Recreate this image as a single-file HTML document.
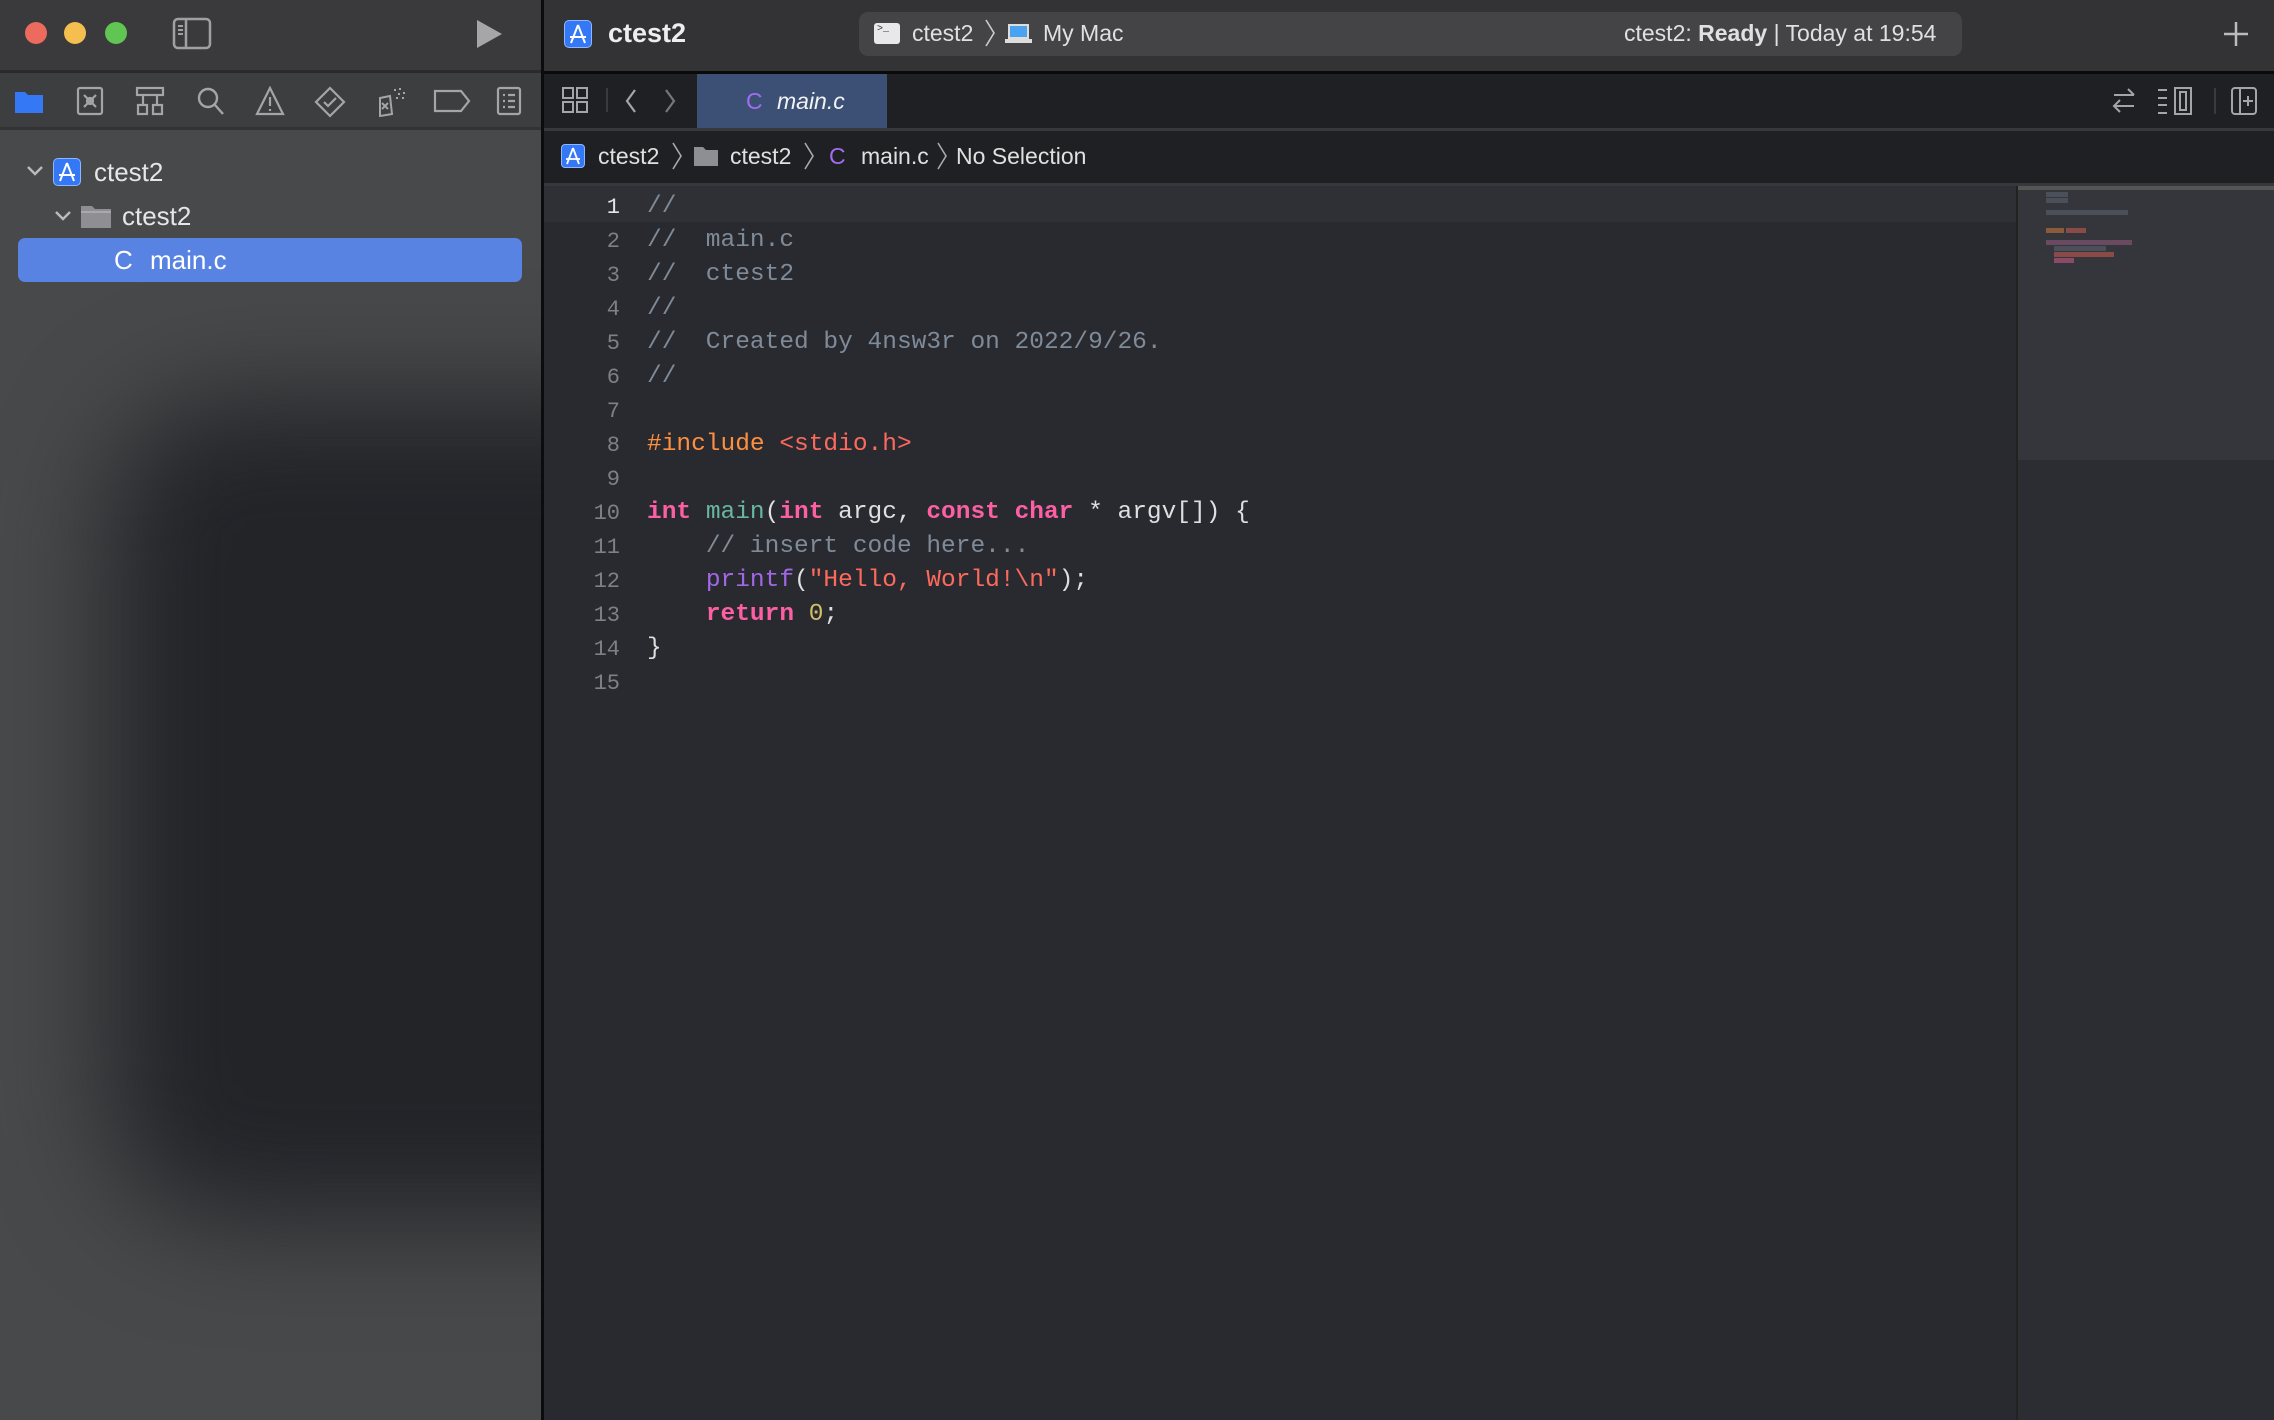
<!DOCTYPE html>
<html><head><meta charset="utf-8"><style>
*{margin:0;padding:0;box-sizing:border-box}
body{width:2274px;height:1420px;overflow:hidden;background:#292a30;font-family:"Liberation Sans",sans-serif;position:relative}
.abs{position:absolute}
#side{left:0;top:0;width:541px;height:1420px;background:#48494b;overflow:hidden}
#blob{left:110px;top:400px;width:800px;height:820px;background:#232428;filter:blur(55px);border-radius:120px}
#divv{left:541px;top:0;width:3px;height:1420px;background:#0c0c0e}
#title{left:544px;top:0;width:1730px;height:72px;background:#333336}
#sidetop{left:0;top:0;width:541px;height:72px;background:#3a3a3c}
.hl{height:3px;background:#2c2c2e}
#tabbar{left:544px;top:74px;width:1730px;height:54px;background:#1f2023}
#crumb{left:544px;top:131px;width:1730px;height:52px;background:#1f2023}
.code{font-family:"Liberation Mono",monospace;font-size:24.5px;white-space:pre;position:absolute;left:647px;color:#dfdfe0}
.ln{font-family:"Liberation Mono",monospace;font-size:22px;color:#7f8087;position:absolute;width:80px;text-align:right;left:540px}
.cm{color:#7f8b98}.kw{color:#fc5fa3;font-weight:bold}.fn{color:#67b7a4}.pp{color:#fd8f3f}.st{color:#fc6a5d}.pf{color:#a167e6}.nm{color:#d0bf69}
.t{color:#e6e6e6;font-size:25px;position:absolute}
svg{position:absolute}
</style></head><body>
<div id="side" class="abs"><div id="blob" class="abs"></div></div>
<div id="sidetop" class="abs"></div>
<div class="abs hl" style="left:0;top:70px;width:541px;background:#2a2a2c"></div>
<div class="abs hl" style="left:0;top:127px;width:541px;background:#333335"></div>
<div class="abs" style="left:0;top:73px;width:541px;height:54px;background:#3d3e40"></div>
<div id="divv" class="abs"></div>
<div id="title" class="abs"></div>
<div class="abs" style="left:544px;top:71px;width:1730px;height:3px;background:#0a0a0a"></div>
<div id="tabbar" class="abs"></div>
<div class="abs" style="left:544px;top:128px;width:1730px;height:3px;background:#38383b"></div>
<div id="crumb" class="abs"></div>
<div class="abs" style="left:544px;top:183px;width:1730px;height:3px;background:#38383b"></div>

<!-- traffic lights -->
<div class="abs" style="left:25px;top:22px;width:22px;height:22px;border-radius:50%;background:#ec6a5e"></div>
<div class="abs" style="left:64px;top:22px;width:22px;height:22px;border-radius:50%;background:#f4bf4f"></div>
<div class="abs" style="left:105px;top:22px;width:22px;height:22px;border-radius:50%;background:#61c554"></div>
<svg style="left:172px;top:17px" width="40" height="33"><rect x="2" y="2" width="36" height="29" rx="4" fill="none" stroke="#a0a0a2" stroke-width="2.5"/><line x1="14" y1="2" x2="14" y2="31" stroke="#a0a0a2" stroke-width="2.5"/><path d="M6 9h5M6 13h5M6 17h5" stroke="#a0a0a2" stroke-width="2"/></svg>
<svg style="left:474px;top:18px" width="30" height="32"><path d="M3 2 L28 16 L3 30Z" fill="#a6a6a8"/></svg>

<!-- navigator icons -->
<svg style="left:14px;top:88px" width="30" height="26"><path d="M1 4h10l3 3h15v18H1Z" fill="#3478f6"/></svg>
<svg style="left:76px;top:86px" width="28" height="30" fill="none" stroke="#a5a5a7" stroke-width="2.2"><rect x="2" y="2" width="24" height="26" rx="2"/><path d="M8 9l12 12M20 9L8 21"/><circle cx="14" cy="15" r="3"/></svg>
<svg style="left:135px;top:86px" width="30" height="30" fill="none" stroke="#a5a5a7" stroke-width="2.2"><rect x="2" y="2" width="26" height="7"/><path d="M8 9v10M22 9v10"/><rect x="3" y="19" width="9" height="9"/><rect x="18" y="19" width="9" height="9"/></svg>
<svg style="left:196px;top:86px" width="30" height="30" fill="none" stroke="#a5a5a7" stroke-width="2.4"><circle cx="12" cy="12" r="9"/><path d="M19 19l8 9"/></svg>
<svg style="left:255px;top:86px" width="30" height="30" fill="none" stroke="#a5a5a7" stroke-width="2.2"><path d="M15 2L2 28h26Z"/><path d="M15 11v9M15 23v2"/></svg>
<svg style="left:314px;top:86px" width="32" height="32" fill="none" stroke="#a5a5a7" stroke-width="2.2"><path d="M16 2L30 16 16 30 2 16Z"/><path d="M10 16l4 4 8-8"/></svg>
<svg style="left:374px;top:86px" width="34" height="32" fill="none" stroke="#a5a5a7" stroke-width="2"><path d="M6 12l10 -2 2 18-12 2Z"/><path d="M8 17l6 6M14 17l-6 6"/><path d="M20 4h2M25 3h2M24 8h2M29 7h2M22 12h2M28 12h2" /></svg>
<svg style="left:432px;top:89px" width="40" height="24" fill="none" stroke="#a5a5a7" stroke-width="2.2"><path d="M3 2h26l8 10-8 10H3Z"/></svg>
<svg style="left:496px;top:86px" width="26" height="30" fill="none" stroke="#a5a5a7" stroke-width="2.2"><rect x="2" y="2" width="22" height="26" rx="2"/><path d="M7 9h2M12 9h7M7 15h2M12 15h7M7 21h2M12 21h7"/></svg>

<!-- tree -->
<svg style="left:26px;top:165px" width="18" height="12"><path d="M2 2l7 7 7-7" fill="none" stroke="#bbb" stroke-width="2.4"/></svg>
<div class="abs" style="left:53px;top:158px;width:28px;height:28px;border-radius:5px;background:#3478f6;border:1.5px solid #8fb7ff"></div>
<svg style="left:53px;top:158px" width="28" height="28" fill="none" stroke="#fff" stroke-width="2"><path d="M14 5L7 23M14 5l7 18M6 17h16"/></svg>
<div class="t" style="left:94px;top:157px;font-size:26px">ctest2</div>
<svg style="left:54px;top:210px" width="18" height="12"><path d="M2 2l7 7 7-7" fill="none" stroke="#bbb" stroke-width="2.4"/></svg>
<svg style="left:80px;top:203px" width="32" height="26"><path d="M1 3h11l3 3h16v19H1Z" fill="#8e8e93"/><path d="M1 9h30" stroke="#a8a8ad" stroke-width="2"/></svg>
<div class="t" style="left:122px;top:201px;font-size:26px">ctest2</div>
<div class="abs" style="left:18px;top:238px;width:504px;height:44px;border-radius:7px;background:#5883e2"></div>
<div class="t" style="left:114px;top:245px;font-size:26px;color:#fff">C</div>
<div class="t" style="left:150px;top:245px;font-size:26px;color:#fff">main.c</div>

<!-- title bar -->
<div class="abs" style="left:564px;top:20px;width:28px;height:28px;border-radius:5px;background:#3478f6;border:1.5px solid #8fb7ff"></div>
<svg style="left:564px;top:20px" width="28" height="28" fill="none" stroke="#fff" stroke-width="2"><path d="M14 5L7 23M14 5l7 18M6 17h16"/></svg>
<div class="t" style="left:608px;top:18px;font-size:27px;font-weight:bold;color:#eee">ctest2</div>
<div class="abs" style="left:859px;top:12px;width:1103px;height:44px;border-radius:9px;background:#444446"></div>
<div class="abs" style="left:874px;top:23px;width:26px;height:21px;border-radius:3px;background:#e8e8ea"></div>
<div class="abs" style="left:877px;top:24px;font-size:10px;color:#333;font-family:'Liberation Mono'">&gt;_</div>
<div class="t" style="left:912px;top:20px;font-size:23px;color:#e0e0e0">ctest2</div>
<svg style="left:984px;top:18px" width="12" height="30"><path d="M2 2l8 13-8 13" fill="none" stroke="#ccc" stroke-width="1.6"/></svg>
<div class="abs" style="left:1008px;top:24px;width:21px;height:15px;background:#4aa3f0;border:2px solid #ddd"></div>
<div class="abs" style="left:1005px;top:39px;width:27px;height:4px;background:#ddd"></div>
<div class="t" style="left:1043px;top:20px;font-size:23px;color:#e0e0e0">My Mac</div>
<div class="t" style="left:1624px;top:20px;font-size:23px;color:#e0e0e0">ctest2: <b>Ready</b> | Today at 19:54</div>
<svg style="left:2223px;top:21px" width="26" height="26"><path d="M13 1v24M1 13h24" stroke="#bbb" stroke-width="2.5"/></svg>

<!-- tab bar -->
<svg style="left:561px;top:86px" width="28" height="28" fill="none" stroke="#a5a5a7" stroke-width="2"><rect x="2" y="2" width="10" height="10"/><rect x="16" y="2" width="10" height="10"/><rect x="2" y="16" width="10" height="10"/><rect x="16" y="16" width="10" height="10"/></svg>
<div class="abs" style="left:606px;top:88px;width:2px;height:24px;background:#3a3a3c"></div>
<svg style="left:624px;top:88px" width="14" height="26"><path d="M11 2L3 13l8 11" fill="none" stroke="#a5a5a7" stroke-width="2.2"/></svg>
<svg style="left:663px;top:88px" width="14" height="26"><path d="M3 2l8 11-8 11" fill="none" stroke="#777" stroke-width="2.2"/></svg>
<div class="abs" style="left:697px;top:74px;width:190px;height:54px;background:#3c5075"></div>
<div class="t" style="left:746px;top:88px;font-size:23px;color:#a36cf0">C</div>
<div class="t" style="left:777px;top:88px;font-size:23px;font-style:italic;color:#f2f2f2">main.c</div>
<svg style="left:2110px;top:86px" width="28" height="30" fill="none" stroke="#a5a5a7" stroke-width="2"><path d="M4 9h20M18 3l6 6M24 20H4M10 14l-6 6 6 6"/></svg>
<svg style="left:2156px;top:86px" width="38" height="30" fill="none" stroke="#a5a5a7" stroke-width="2"><path d="M2 4h9M2 12h9M2 19h9M2 27h9"/><rect x="19" y="2" width="16" height="26"/><rect x="24" y="6" width="6" height="18"/></svg>
<div class="abs" style="left:2214px;top:88px;width:2px;height:26px;background:#3a3a3c"></div>
<svg style="left:2230px;top:86px" width="28" height="30" fill="none" stroke="#a5a5a7" stroke-width="2"><rect x="2" y="2" width="24" height="26" rx="3"/><path d="M10 2v26M18 10v10M13 15h10"/></svg>

<!-- breadcrumb -->
<div class="abs" style="left:561px;top:144px;width:24px;height:24px;border-radius:4px;background:#3478f6;border:1.5px solid #8fb7ff"></div>
<svg style="left:561px;top:144px" width="24" height="24" fill="none" stroke="#fff" stroke-width="1.8"><path d="M12 4L6 20M12 4l6 16M5 15h14"/></svg>
<div class="t" style="left:598px;top:143px;font-size:23px;color:#e0e0e0">ctest2</div>
<svg style="left:671px;top:141px" width="12" height="30"><path d="M2 2l8 13-8 13" fill="none" stroke="#aaa" stroke-width="1.6"/></svg>
<svg style="left:693px;top:145px" width="26" height="22"><path d="M1 2h9l3 3h12v16H1Z" fill="#8e8e93"/></svg>
<div class="t" style="left:730px;top:143px;font-size:23px;color:#e0e0e0">ctest2</div>
<svg style="left:803px;top:141px" width="12" height="30"><path d="M2 2l8 13-8 13" fill="none" stroke="#aaa" stroke-width="1.6"/></svg>
<div class="t" style="left:829px;top:143px;font-size:23px;color:#a36cf0">C</div>
<div class="t" style="left:861px;top:143px;font-size:23px;color:#e0e0e0">main.c</div>
<svg style="left:936px;top:141px" width="12" height="30"><path d="M2 2l8 13-8 13" fill="none" stroke="#aaa" stroke-width="1.6"/></svg>
<div class="t" style="left:956px;top:143px;font-size:23px;color:#e0e0e0">No Selection</div>

<!-- editor -->
<div class="abs" style="left:544px;top:186px;width:1472px;height:36px;background:#2f3036"></div>
<div class="abs" style="left:2016px;top:186px;width:258px;height:1234px;background:#2c2d32;border-left:2px solid #222"></div>
<div class="abs" style="left:2018px;top:186px;width:256px;height:274px;background:#35363b"></div>
<div class="abs" style="left:2018px;top:186px;width:256px;height:4px;background:#555"></div>
<div class="abs" style="left:2046px;top:192px;width:22px;height:5px;background:#4a4f5a"></div>
<div class="abs" style="left:2046px;top:198px;width:22px;height:5px;background:#4a4f5a"></div>
<div class="abs" style="left:2046px;top:210px;width:82px;height:5px;background:#4a4f5a"></div>
<div class="abs" style="left:2046px;top:228px;width:18px;height:5px;background:#8a5a3a"></div>
<div class="abs" style="left:2066px;top:228px;width:20px;height:5px;background:#8a4a48"></div>
<div class="abs" style="left:2046px;top:240px;width:86px;height:5px;background:#6a4a60"></div>
<div class="abs" style="left:2054px;top:246px;width:52px;height:5px;background:#4a4f5a"></div>
<div class="abs" style="left:2054px;top:252px;width:60px;height:5px;background:#8a4a48"></div>
<div class="abs" style="left:2054px;top:258px;width:20px;height:5px;background:#8a4a68"></div>

<div class="ln" style="top:195px;color:#e6e6e6">1</div>
<div class="ln" style="top:229px">2</div>
<div class="ln" style="top:263px">3</div>
<div class="ln" style="top:297px">4</div>
<div class="ln" style="top:331px">5</div>
<div class="ln" style="top:365px">6</div>
<div class="ln" style="top:399px">7</div>
<div class="ln" style="top:433px">8</div>
<div class="ln" style="top:467px">9</div>
<div class="ln" style="top:501px">10</div>
<div class="ln" style="top:535px">11</div>
<div class="ln" style="top:569px">12</div>
<div class="ln" style="top:603px">13</div>
<div class="ln" style="top:637px">14</div>
<div class="ln" style="top:671px">15</div>

<div class="code cm" style="top:193px">//</div>
<div class="code cm" style="top:227px">//  main.c</div>
<div class="code cm" style="top:261px">//  ctest2</div>
<div class="code cm" style="top:295px">//</div>
<div class="code cm" style="top:329px">//  Created by 4nsw3r on 2022/9/26.</div>
<div class="code cm" style="top:363px">//</div>
<div class="code" style="top:431px"><span class="pp">#include </span><span class="st">&lt;stdio.h&gt;</span></div>
<div class="code" style="top:499px"><span class="kw">int</span> <span class="fn">main</span>(<span class="kw">int</span> argc, <span class="kw">const</span> <span class="kw">char</span> * argv[]) {</div>
<div class="code" style="top:533px">    <span class="cm">// insert code here...</span></div>
<div class="code" style="top:567px">    <span class="pf">printf</span>(<span class="st">"Hello, World!\n"</span>);</div>
<div class="code" style="top:601px">    <span class="kw">return</span> <span class="nm">0</span>;</div>
<div class="code" style="top:635px">}</div>
</body></html>
